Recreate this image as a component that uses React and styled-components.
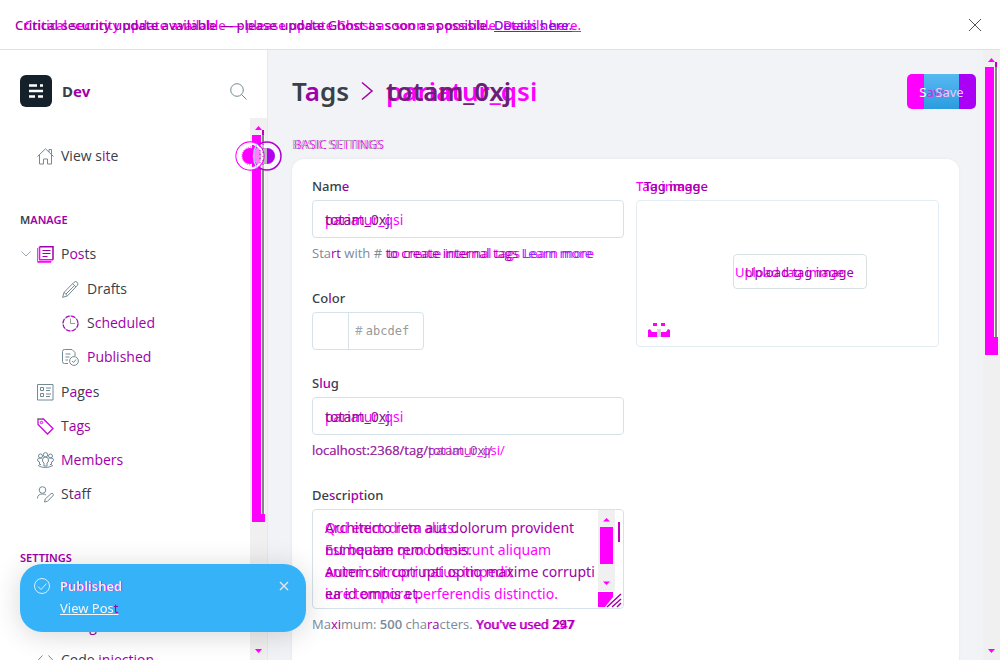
import React from "react";
import styled, { createGlobalStyle, css } from "styled-components";

const INK = "#394047";
const PLUM = "#a000a8";
const PINK = "#ff00ff";
const GREY = "#7c8b9a";

const Global = createGlobalStyle`
  *, *::before, *::after { box-sizing: border-box; }
  html, body, #root { height: 100%; }
  body { margin: 0; overflow: hidden; background: #fff; color: ${INK};
    font: 400 14px/20px "Noto Sans", "Open Sans", sans-serif; }
  button, input, textarea { font: inherit; color: inherit; }
  p, h1, h2, ul { margin: 0; padding: 0; font-weight: 400; }
`;

const Page = styled.div`height: 100%; display: flex; flex-direction: column;`;

/* two versions of one piece of text, laid over each other */
const Stack = styled.span`
  display: inline-grid; justify-items: start; white-space: pre;
  > * { grid-area: 1 / 1; }
`;
const Under = styled.span`
  color: ${PINK}; user-select: none;
  ${(p) => p.$indent && css`margin-left: ${p.$indent}px;`}
`;
const Over = styled.span`
  color: ${(p) => p.$color || PLUM};
  ${(p) => p.$indent && css`margin-left: ${p.$indent}px;`}
`;
const Hot = styled.span`color: ${PLUM};`;
function Diff({ under, over, indent, overIndent, color }) {
  return (
    <Stack>
      <Under aria-hidden="true" $indent={indent}>{under}</Under>
      <Over $color={color} $indent={overIndent}>{over}</Over>
    </Stack>
  );
}

const Banner = styled.header`
  flex: none; display: flex; align-items: center; justify-content: space-between;
  height: 50px; padding: 0 18px 0 15px; border-bottom: 1px solid #dde1e5;
  font-size: 13px; font-weight: 500;
`;
const BannerLink = styled.a`color: #8a10e0; text-decoration: underline;`;
const IconButton = styled.button`
  display: grid; place-items: center; padding: 0; border: 0; background: none; cursor: pointer;
`;
const Icon = styled.svg.attrs({ fill: "none", "aria-hidden": true })`
  display: block; stroke: ${(p) => p.$c || "#738a94"}; stroke-width: 1;
`;

const Body = styled.div`flex: 1; min-height: 0; display: flex;`;
const Sidebar = styled.nav`
  position: relative; flex: none; width: 268px; border-right: 1px solid #e5e9ed;
  display: flex; flex-direction: column;
`;
const SiteHead = styled.div`
  flex: none; display: flex; align-items: center; gap: 10px; height: 68px; padding: 14px 20px 0 20px;
`;
const Logo = styled.svg`width: 32px; height: 32px;`;
const SiteName = styled.span`flex: 1; font-size: 15px; font-weight: 700;`;
const Scroll = styled.div`flex: 1; min-height: 0; display: flex;`;
const NavBody = styled.div`
  flex: 1; overflow: hidden; padding-top: 21px; font-family: "Open Sans", sans-serif;
`;
const NavList = styled.ul`list-style: none;`;
const SubList = styled(NavList)`padding: 1px 0;`;
const NavItem = styled.li`
  display: flex; align-items: center; height: 34px;
  padding-left: ${(p) => (p.$sub ? 62 : p.$fold ? 21 : 37)}px;
`;
const NavLink = styled.a`
  display: flex; align-items: center; gap: ${(p) => (p.$sub ? 8 : 7)}px; color: ${INK}; text-decoration: none;
`;
const Fold = styled(IconButton)`width: 16px; height: 16px; padding-right: 6px;`;
const NavTitle = styled.h2`
  padding: 0 20px; margin: 37px 0 7px; font-family: "Noto Sans", sans-serif; font-size: 11px; line-height: 20px;
  font-weight: 600; color: ${PLUM};
`;

const Track = styled.div`
  flex: none; width: 17px; background: #f0f0f0; display: flex; flex-direction: column; align-items: center;
  justify-content: space-between; height: 100%;
`;
const Thumb = styled.svg`display: block; width: 17px; height: ${(p) => p.$h}px;`;

function Bar({ thumb, line, full }) {
  const end = thumb + full;
  return (
    <Track aria-hidden="true">
      <Thumb $h={end}>
        <path d="M5 12h7l-3.500-4z" fill={PINK} />
        <rect x="2" y={thumb} width="9" height={full} fill={PINK} />
        <rect x="11" y={line} width="4" height={end - line} fill={PINK} />
        <rect x="11" y="17" width="4" height={line - 17} fill="#f8f8f8" />
        <rect x="12" y="12" width="2" height={line - 12} fill="#858585" />
        <rect x="12" y="12" width="2" height="5" fill="#c000c0" />
      </Thumb>
      <Thumb $h={14}><path d="M5 3h7l-3.500 4z" fill={PINK} /></Thumb>
    </Track>
  );
}

const ResizeHandle = styled(IconButton)`
  position: absolute; left: 234px; top: 90px; width: 50px; height: 32px; z-index: 2;
`;

const Main = styled.main`flex: 1; min-width: 0; overflow: hidden; background: #f1f3f7; padding: 20px 24px 0;`;
const Head = styled.div`
  display: flex; align-items: center; justify-content: space-between; margin-right: -17px; height: 42px;
`;
const Title = styled.h1`
  display: flex; align-items: center; gap: 12px; font-size: 26px; line-height: 36px; font-weight: 600;
`;
const Save = styled.button`
  width: 69px; height: 35px; border: 0; border-radius: 5px; padding: 1px 0 0; font-size: 13px;
  background: linear-gradient(90deg, #ff00ff 17px, transparent 17px, transparent 52px, #aa00f5 52px),
    linear-gradient(#57b9f0, #2b9ce0);
`;
const Section = styled.h2`
  margin-top: 23px; font-family: "Open Sans", sans-serif; font-size: 12px; line-height: 20px;
`;
const Card = styled.form`
  margin-top: 4px; height: 560px; padding: 19px 20px; border-radius: 12px; background: #fff;
  box-shadow: 0 0 3px rgba(0, 0, 0, 0.06);
  display: grid; grid-template-columns: 312fr 303fr; column-gap: 12px; align-items: start;
`;
const Fields = styled.div`display: flex; flex-direction: column;`;
const Field = styled.div`margin-bottom: ${(p) => p.$gap || 27}px;`;
const Label = styled.label`
  display: block; line-height: 16px; margin-bottom: 6px; font-size: 13px; font-weight: 500;
  cursor: default;
`;
const BoxWrap = styled.div`
  display: grid; > * { grid-area: 1 / 1; } 
`;
const Input = styled.input`
  width: 100%; height: 38px; padding: 0 13px; border: 1px solid #d5e2e9; border-radius: 4px; background: #fff;
  color: transparent; min-width: 0;
`;
const InputText = styled.span`align-self: center; padding: 2px 0 0 13px; pointer-events: none; font-size: 14px;`;
const Help = styled.p`
  margin-top: 5px; font-family: "Open Sans", sans-serif; font-size: 13px; line-height: 20px; color: ${GREY};
  white-space: nowrap;
`;
const Count = styled.b`font-weight: 600;`;
const HelpLink = styled.a`color: #8a30ff; text-decoration: none;`;
const ColorRow = styled.div`
  display: flex; width: 112px; height: 38px; border: 1px solid #d5e2e9; border-radius: 4px; overflow: hidden; align-items: center;
`;
const Swatch = styled.span`width: 36px; height: 36px; border-right: 1px solid #d5e2e9;`;
const Hash = styled.span`padding-left: 6px; color: #9aa5b1; font-size: 12px;`;
const Hex = styled.input`
  width: 60px; border: 0; padding: 0 0 0 3px; outline: 0; background: none;
  font: 12px/20px "DejaVu Sans Mono", monospace; color: #999;
  &::placeholder { color: #999; opacity: 1; }
`;
const Area = styled.textarea`
  height: 100px; width: 100%; resize: none; border: 1px solid #d5e2e9; border-radius: 4px; overflow: hidden;
  padding: 7px 13px; color: transparent;
`;
const AreaText = styled.div`
  display: flex; justify-content: space-between; height: 100px; padding: 8px 0 0 13px; pointer-events: none;
  font-size: 14px; line-height: 22px;
`;
const AreaLines = styled.div`display: flex; flex-direction: column; width: 270px;`;
const AreaBar = styled.svg`width: 27px; height: 98px; margin: -7px 0 0; flex: none;`;

const ImageField = styled.div`display: flex; flex-direction: column;`;
const Drop = styled.div`
  position: relative; height: 147px; border: 1px solid #e3edf4; border-radius: 4px; padding: 53px 0 0 87px;
  display: flex; align-items: flex-start; 
`;
const Upload = styled.button`
  width: 134px; height: 35px; padding: 0 0 0 1px; border: 1px solid #dadfe2; margin-left: 9px; border-radius: 4px;
  background: #fff; font-size: 13px; text-align: left;
`;
const Unsplash = styled(IconButton)`position: absolute; left: 11px; bottom: 9px;`;

const Toast = styled.aside`
  position: fixed; left: 20px; bottom: 28px; z-index: 5; width: 286px; height: 68px; border-radius: 22px;
  background: #36b2f9; color: #f4f6f8; box-shadow: 0 3px 28px rgba(0, 0, 0, 0.16);
  display: grid; grid-template-columns: 16px 1fr 12px; column-gap: 10px; align-items: start;
  padding: 11px 16px 0 14px; font-size: 13px; line-height: 22px;
`;
const ToastTitle = styled.div`font-weight: 600;`;
const ToastLink = styled.a`color: inherit;`;
const ToastIcon = styled.span`padding-top: 3px;`;

const HomeIcon = () => <Icon width="17" height="17" viewBox="0 0 17 17"><path d="M.5 8.500 8.500.8l8 7.700M12 4V1.500h2.500V6.500M2.500 7v9h4v-5h4v5h4V7" /></Icon>;
const PostsIcon = () => (
  <Icon width="17" height="17" viewBox="0 0 17 17">
    <path d="M.5 2v13.500h14" /><path d="M2.500.8v13M2 13.800h14" stroke={PINK} strokeWidth="1.600" />
    <path d="M2.500.8h13.500v13" stroke={PLUM} strokeWidth="1.500" />
    <path d="M.5 16h13.500" stroke={PINK} strokeWidth="1.600" /><path d="M5.500 4.500h8M5.500 7.500h8M5.500 10.500h5" stroke={PLUM} strokeWidth="1.200" />
  </Icon>
);
const PencilIcon = () => <Icon width="17" height="17" viewBox="0 0 17 17"><path d="m.6 16.400 1.400-5L12 1.300q1.700-1.500 3.200 0 1.500 1.500 0 3.200L5.500 14.800zM2 11.400l3.500 3.400M10.700 2.800l3.300 3.200M4 13 12.500 4.500" /></Icon>;
const ClockIcon = () => <Icon width="17" height="17" viewBox="0 0 17 17"><circle cx="8.500" cy="8.500" r="7.500" stroke="#8a93a0" /><circle cx="8.500" cy="8.500" r="7.500" stroke="#c000c8" strokeDasharray="4 2" strokeWidth="1.200" /><path d="M8.500 3.500v5H13" stroke="#999" /></Icon>;
const PublishedIcon = () => <Icon width="17" height="17" viewBox="0 0 17 17"><path d="M6 14.500H2.500q-2 0-2-2v-10q0-2 2-2h7.500l3 3V7M3.500 5h5M3.500 8h4M3.500 11h2.500" /><circle cx="12" cy="12" r="4.400" /><path d="m10 12 1.500 1.500 2.500-3" /></Icon>;
const PagesIcon = () => <Icon width="17" height="17" viewBox="0 0 17 17"><path d="M.5.5h15.500v15.500H.5zM3.500 3.500h3v3h-3zM3.500 9.500h3v3h-3zM9 4h5M9 6.500h4M9 10h5M9 12.500h4" /></Icon>;
const TagIcon = () => <Icon width="17" height="17" viewBox="0 0 17 17" $c="#d000e0"><path d="M1 1v5.500l9.500 9.500 5.500-5.500L6.500 1z" strokeWidth="1.300" /><path d="M.5 6.500V.5H5" stroke="#999" /><circle cx="4.500" cy="4.500" r="1.200" /></Icon>;
const MembersIcon = () => <Icon width="17" height="17" viewBox="0 0 17 17"><circle cx="8.500" cy="2.800" r="2.200" /><circle cx="3.500" cy="4" r="2" /><circle cx="13.500" cy="4" r="2" /><path d="M7 14v-3q-1.500-.5-1.500-3 0-3 3-3t3 3q0 2.500-1.500 3v3zM4 12.500H2.500V10Q.5 9.500.5 8q0-2 2.500-2h2M13 12.500h1.500V10q2-.5 2-2 0-2-2.500-2h-2M1 13.500q7 4 15 0" /></Icon>;
const StaffIcon = () => <Icon width="17" height="17" viewBox="0 0 17 17"><circle cx="5.500" cy="4" r="3.300" /><path d="M.5 12.500q0-4.500 5-4.500 2.500 0 3.500 1M7.500 16l.7-3L14 7.700q1.200-.8 2 .1.900 1-.1 2L10.500 15.300z" /></Icon>;
const CodeIcon = () => <Icon width="17" height="17" viewBox="0 0 17 17"><path d="M5.500 3.500.8 8.500l4.700 5M11.500 3.500l4.700 5-4.700 5" /></Icon>;

const SUB = [
  { icon: PencilIcon, sub: true, text: "Drafts" },
  { icon: ClockIcon, sub: true, text: <>S<Hot>cheduled</Hot></> },
  { icon: PublishedIcon, sub: true, text: <Hot>Published</Hot> },
];
const NAV = [
  { icon: PagesIcon, text: <>P<Hot>a</Hot>g<Hot>e</Hot>s</> },
  { icon: TagIcon, text: <>T<Hot>ags</Hot></> },
  { icon: MembersIcon, text: <Hot>Members</Hot> },
  { icon: StaffIcon, text: <>St<Hot>a</Hot>ff</> },
];
const renderItem = ({ icon: I, sub, text }, i) => (
  <NavItem key={i} $sub={sub}><NavLink $sub={sub} href="#nav"><I /><span>{text}</span></NavLink></NavItem>
);

export default function App() {
  return (
    <Page>
      <Global />
      <Banner>
        <Diff
          indent={9}
          under={<>Critical security update available — please update Ghost as soon as possible. <u>Details here.</u></>}
          over={<>Critical security update available — please update Ghost as soon as possible. <BannerLink href="#details">Details here.</BannerLink></>}
        />
        <IconButton aria-label="Close banner"><Icon width="14" height="14" $c="#555"><path d="m1 1 12 12M13 1 1 13" /></Icon></IconButton>
      </Banner>
      <Body>
        <Sidebar>
          <SiteHead>
            <Logo viewBox="0 0 32 32" aria-hidden="true"><rect width="32" height="32" rx="6" fill="#15212a" /><path d="M9 10.500h8m3 0h3M9 16h14M9 21.500h6m3 0h5" stroke="#fff" strokeWidth="2.600" /></Logo>
            <SiteName>D<Hot>ev</Hot></SiteName>
            <IconButton aria-label="Search"><Icon width="17" height="17"><circle cx="7" cy="7" r="6.300" /><path d="m11.500 11.500 5 5" /></Icon></IconButton>
          </SiteHead>
          <Scroll>
            <NavBody>
              <NavList>
                <NavItem><NavLink href="#site"><HomeIcon /><span>View s<Hot>it</Hot>e</span></NavLink></NavItem>
              </NavList>
              <NavTitle><Over $color={INK}>M</Over>ANAGE</NavTitle>
              <NavList>
                <NavItem $fold>
                  <Fold aria-label="Toggle posts"><Icon width="10" height="8" $c="#9aabb5"><path d="m.5 1.500 4.500 4.500 4.500-4.500" /></Icon></Fold>
                  <NavLink href="#posts"><PostsIcon /><span>P<Hot>os</Hot>ts</span></NavLink>
                </NavItem>
                <li><SubList>{SUB.map(renderItem)}</SubList></li>
                {NAV.map(renderItem)}
              </NavList>
              <NavTitle>SETTINGS</NavTitle>
              <NavList>
                <NavItem><NavLink href="#general"><CodeIcon /><span>General</span></NavLink></NavItem>
                <NavItem><NavLink href="#design"><CodeIcon /><Hot>Design</Hot></NavLink></NavItem>
                <NavItem><NavLink href="#code"><CodeIcon /><span>Code <Hot>injection</Hot></span></NavLink></NavItem>
              </NavList>
            </NavBody>
            <Bar thumb={17} line={396} full={387} />
          </Scroll>
          <ResizeHandle aria-label="Collapse sidebar">
            <svg width="50" height="32" fill="none">
              <circle cx="33" cy="16" r="14" fill="#fff" fillOpacity=".5" stroke="#b000d0" strokeWidth="1.500" />
              <circle cx="33" cy="16" r="8" fill="#b000f0" /><path d="M33 8a8 8 0 0 0 0 16z" fill="#b8b8b8" />
              <circle cx="16" cy="16" r="14" stroke={PINK} strokeWidth="1.300" />
              <circle cx="16" cy="16" r="12.500" stroke="#fff" strokeWidth="2" />
              <path d="M20 9a8 8 0 1 0 0 14z" fill={PINK} /><path d="M17 7a9 9 0 1 0 0 18" stroke="#ff40ff" strokeDasharray="1 1" />
              <path d="M23 4q-7 12 0 24" stroke="#a5dcf5" strokeWidth="1.500" />
              <path d="M26 6v20M29 4v24" stroke="#d000e0" strokeDasharray="1 3" />
            </svg>
          </ResizeHandle>
        </Sidebar>
        <Main>
          <Head>
            <Title>
              <span>T<Hot>a</Hot>gs</span>
              <Icon width="13" height="20" $c={PLUM}><path d="m1 1.500 10 8.500L1 18.500" strokeWidth="1.500" /></Icon>
              <Diff under="pariatur_qsi" over="totam_0xj" color="#6b2078" />
            </Title>
            <Save type="button"><Stack><Over $color="#fff">S<Over $color="#c030e0">ave</Over></Over><Over $color="#f0c8ff" $indent={16}>Save</Over></Stack></Save>
          </Head>
          <Section><Diff under="BASIC SETTINGS" over="BASIC SETTINGS" color="#b0a8b4" indent={2} /></Section>
          <Card>
            <Fields>
              <Field>
                <Label htmlFor="name">Nam<Hot>e</Hot></Label>
                <BoxWrap>
                  <Input id="name" defaultValue="totam_0xj" />
                  <InputText><Diff under="pariatur_qsi" over="totam_0xj" color="#7a1a80" /></InputText>
                </BoxWrap>
                <Help>Sta<Hot>rt</Hot> with # <Diff under="to create internal tags Learn more" indent={2} over={<>to create internal tags <HelpLink href="#learn">Learn more</HelpLink></>} /></Help>
              </Field>
              <Field $gap={25}>
                <Label htmlFor="hex">Co<Hot>l</Hot>or</Label>
                <ColorRow><Swatch /><Hash>#</Hash><Hex id="hex" placeholder="abcdef" /></ColorRow>
              </Field>
              <Field>
                <Label htmlFor="slug">S<Hot>lu</Hot>g</Label>
                <BoxWrap>
                  <Input id="slug" defaultValue="totam_0xj" />
                  <InputText><Diff under="pariatur_qsi" over="totam_0xj" color="#7a1a80" /></InputText>
                </BoxWrap>
                <Help><Diff under="localhost:2368/tag/pariatur_qsi/" over="localhost:2368/tag/totam_0xj/" color="#8a4090" /></Help>
              </Field>
              <Field>
                <Label htmlFor="desc">De<Hot>s</Hot>cri<Hot>pt</Hot>ion</Label>
                <BoxWrap>
                  <Area id="desc" />
                  <AreaText>
                    <AreaLines>
                      <Diff under="Qui enim dicta alias." over="Architecto rem aut dolorum provident" />
                      <Diff under="Est beatae quod deserunt aliquam" over="numquam rem omnis." />
                      <Diff under="animi corrupti natus impedit" over="Autem sit corrupti optio maxime corrupti" />
                      <Diff under="iure tempora perferendis distinctio." over="ea id omnis et." />
                    </AreaLines>
                    <AreaBar viewBox="0 0 27 98" aria-hidden="true">
                      <rect x="1" width="17" height="81" fill="#f0f0f0" /><path d="M6 11.500h7L9.500 8zM6 71.500h7L9.500 75z" fill={PINK} />
                      <rect x="3" y="17" width="13" height="37" fill={PINK} /><rect x="21" y="12" width="2" height="20" fill="#c000c0" />
                      <path d="M1 82h15v5L8 97H1z" fill={PINK} /><path d="M10 97 24 84M15 97l9-8M20 97l4-4" stroke="#a000a8" strokeWidth="1.500" />
                    </AreaBar>
                  </AreaText>
                </BoxWrap>
                <Help>Ma<Hot>xi</Hot>mum: <Count>500</Count> cha<Hot>ra</Hot>cters. <Diff under={<>You've used <Count>247</Count></>} indent={1} over={<>You've used <Count>297</Count></>} /></Help>
              </Field>
            </Fields>
            <ImageField>
              <Label as="div"><Diff under="Tag image" over="Tag image" overIndent={8} /></Label>
              <Drop>
                <Upload type="button"><Diff under="Upload tag image" over="Upload tag image" overIndent={10} color="#a000b0" /></Upload>
                <Unsplash type="button" aria-label="Unsplash">
                  <svg width="22" height="14"><path d="M5 0h4v3H5zM13 0h4v3h-4zM0 7l2-1 2 3h5v5H0zM13 9h5l2-3 2 1v7h-9z" fill={PINK} /><path d="M9 6h4v8H9z" fill="#d8d8d8" /></svg>
                </Unsplash>
              </Drop>
            </ImageField>
          </Card>
        </Main>
        <Bar thumb={17} line={287} full={288} />
      </Body>
      <Toast role="status">
        <ToastIcon><Icon width="16" height="16" $c="#d8eefa"><circle cx="8" cy="8" r="7.500" /><path d="m4 8.500 3 3 5.500-6" /></Icon></ToastIcon>
        <div>
          <ToastTitle><Diff under="Published" indent={1} over="Published" color="#f0ecf4" /></ToastTitle>
          <ToastLink href="#post">View Pos<Hot>t</Hot></ToastLink>
        </div>
        <IconButton aria-label="Dismiss"><Icon width="10" height="22" $c="#e8e0e0"><path d="m1 7 8 8M9 7 1 15" strokeWidth="1.500" /></Icon></IconButton>
      </Toast>
    </Page>
  );
}
